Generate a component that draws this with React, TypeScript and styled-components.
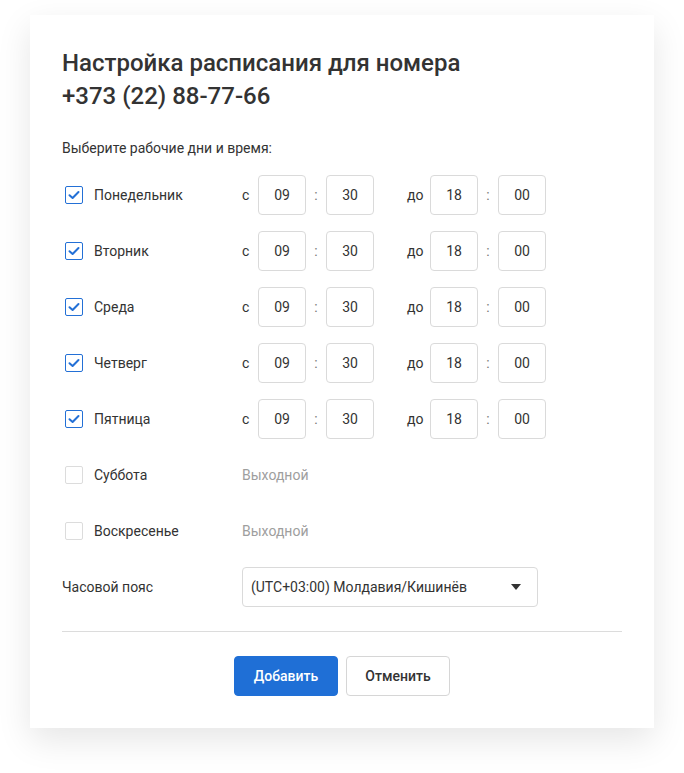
import styled, { createGlobalStyle } from "styled-components";

const GlobalStyle = createGlobalStyle`
  body {
    margin: 0;
    background: #ffffff;
    font-family: Roboto, "Noto Sans", sans-serif;
    color: #333333;
  }
`;

const Page = styled.div`
  padding: 15px 30px 45px;
`;

const Card = styled.div`
  background: #ffffff;
  padding: 32px 32px 32px 32px;
  box-shadow: 0 12px 32px rgba(0, 0, 0, 0.1);
`;

const Title = styled.h1`
  margin: 0;
  font-size: 24px;
  line-height: 33px;
  font-weight: 500;
  color: #333333;
`;

const Subtitle = styled.p`
  margin: 25px 0 17px;
  font-size: 14px;
  line-height: 20px;
  color: #333333;
`;

const Rows = styled.div`
  display: flex;
  flex-direction: column;
  gap: 16px;
`;

const Row = styled.div`
  display: grid;
  grid-template-columns: 180px 1fr;
  align-items: center;
  height: 40px;
`;

const DayLabel = styled.label`
  display: flex;
  align-items: center;
  gap: 11px;
  font-size: 14px;
  color: #333333;
  padding-left: 3px;
`;

const Box = styled.span<{ $checked: boolean }>`
  width: 18px;
  height: 18px;
  box-sizing: border-box;
  border-radius: 2px;
  border: 1px solid ${(p) => (p.$checked ? "#2370d6" : "#dcdcdc")};
  display: flex;
  align-items: center;
  justify-content: center;
  background: #ffffff;
`;

const Times = styled.div`
  display: flex;
  align-items: center;
  font-size: 14px;
  color: #333333;
`;

const Prefix = styled.span`
  width: 16px;
`;

const Until = styled.span`
  padding-left: 33px;
  width: 23px;
`;

const Colon = styled.span`
  width: 20px;
  text-align: center;
  color: #777777;
`;

const TimeBox = styled.div`
  width: 48px;
  height: 40px;
  box-sizing: border-box;
  border: 1px solid #dadada;
  border-radius: 4px;
  display: flex;
  align-items: center;
  justify-content: center;
  font-size: 14px;
  color: #333333;
`;

const DayOff = styled.span`
  font-size: 14px;
  color: #9e9e9e;
`;

const FieldLabel = styled.span`
  font-size: 14px;
  color: #333333;
`;

const Select = styled.div`
  width: 296px;
  height: 40px;
  box-sizing: border-box;
  border: 1px solid #dadada;
  border-radius: 4px;
  display: flex;
  align-items: center;
  justify-content: space-between;
  padding: 0 16px 0 8px;
  font-size: 14px;
  color: #333333;
`;

const Divider = styled.hr`
  margin: 24px 0 24px;
  border: none;
  border-top: 1px solid #dcdcdc;
`;

const Actions = styled.div`
  display: flex;
  justify-content: center;
  gap: 8px;
`;

const Button = styled.button<{ $primary?: boolean }>`
  width: 104px;
  height: 40px;
  box-sizing: border-box;
  border-radius: 4px;
  font-family: Roboto, "Noto Sans", sans-serif;
  font-size: 14px;
  font-weight: 500;
  cursor: pointer;
  border: 1px solid ${(p) => (p.$primary ? "#1f6fd6" : "#d6d6d6")};
  background: ${(p) => (p.$primary ? "#1f6fd6" : "#ffffff")};
  color: ${(p) => (p.$primary ? "#ffffff" : "#333333")};
`;

const Check = () => (
  <svg width="12" height="10" viewBox="0 0 12 10">
    <path d="M1.5 5.2 L4.6 8 L10.5 2" fill="none" stroke="#2370d6" strokeWidth="2" strokeLinecap="round" strokeLinejoin="round" />
  </svg>
);

const days = [
  { name: "Понедельник", on: true },
  { name: "Вторник", on: true },
  { name: "Среда", on: true },
  { name: "Четверг", on: true },
  { name: "Пятница", on: true },
  { name: "Суббота", on: false },
  { name: "Воскресенье", on: false },
];

const App = () => (
  <Page>
    <GlobalStyle />
    <Card>
      <Title>
        Настройка расписания для номера
        <br />
        +373 (22) 88-77-66
      </Title>
      <Subtitle>Выберите рабочие дни и время:</Subtitle>
      <Rows>
        {days.map((d) => (
          <Row key={d.name}>
            <DayLabel>
              <Box $checked={d.on}>{d.on && <Check />}</Box>
              {d.name}
            </DayLabel>
            {d.on ? (
              <Times>
                <Prefix>с</Prefix>
                <TimeBox>09</TimeBox>
                <Colon>:</Colon>
                <TimeBox>30</TimeBox>
                <Until>до</Until>
                <TimeBox>18</TimeBox>
                <Colon>:</Colon>
                <TimeBox>00</TimeBox>
              </Times>
            ) : (
              <DayOff>Выходной</DayOff>
            )}
          </Row>
        ))}
        <Row>
          <FieldLabel>Часовой пояс</FieldLabel>
          <Select>
            (UTC+03:00) Молдавия/Кишинёв
            <svg width="10" height="6" viewBox="0 0 10 6">
              <path d="M0 0 H10 L5 6 Z" fill="#333333" />
            </svg>
          </Select>
        </Row>
      </Rows>
      <Divider />
      <Actions>
        <Button $primary>Добавить</Button>
        <Button>Отменить</Button>
      </Actions>
    </Card>
  </Page>
);

export default App;
